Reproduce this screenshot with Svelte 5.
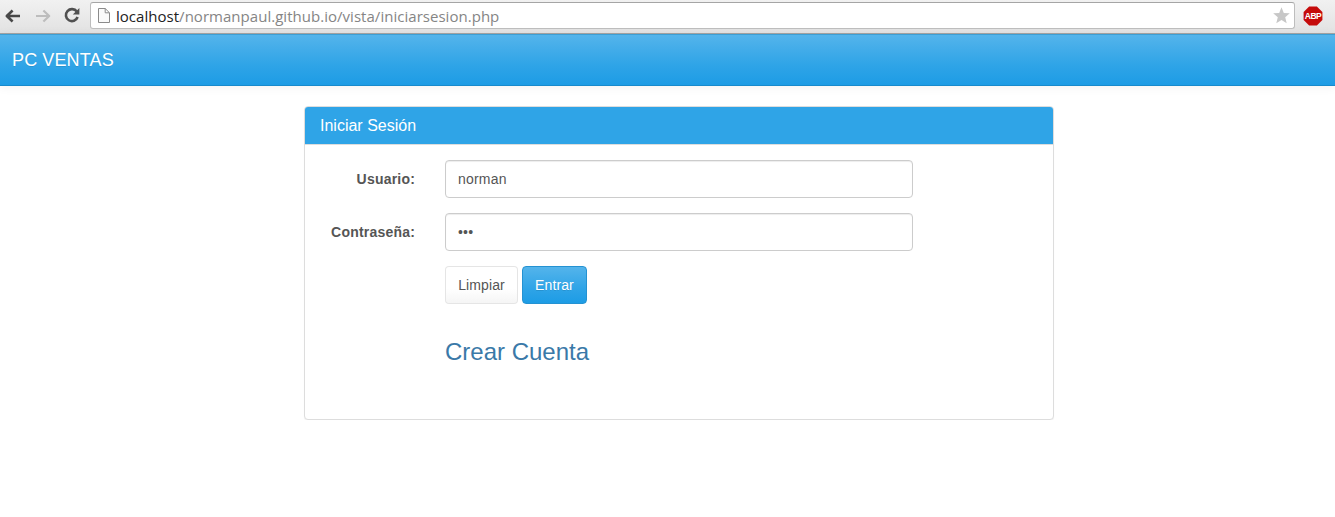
<script>
  let username = $state('norman');
  let password = $state('abc');

  function clearForm() {
    username = '';
    password = '';
  }
</script>

<div class="toolbar">
  <svg class="nav-icon" width="16" height="16" viewBox="0 0 16 16" fill="none" stroke="#484848" stroke-width="2.6" stroke-linejoin="round"><path d="M15 8H2M7.6 2.5L1.8 8l5.8 5.5" /></svg>
  <svg class="nav-icon forward" width="16" height="16" viewBox="0 0 16 16" fill="none" stroke="#bdbdbd" stroke-width="2.2" stroke-linejoin="round"><path d="M1 8h13M8.4 2.5L14.2 8l-5.8 5.5" /></svg>
  <svg class="nav-icon reload" width="16" height="16" viewBox="0 0 16 16"><path d="M12.8 4.6A6 6 0 1 0 13.6 10" fill="none" stroke="#505050" stroke-width="2.6" /><path d="M15.4 1v6.6H8.8z" fill="#505050" /></svg>
  <div class="address">
    <svg class="page-icon" width="12" height="15" viewBox="0 0 12 15" fill="#fafafa" stroke="#8b8b8b"><path d="M.5.5h6.7l4.3 4.3v9.7H.5zM7.2.5v4.3h4.3" /></svg>
    <span class="url">localhost<span class="path">/normanpaul.github.io/vista/iniciarsesion.php</span></span>
    <svg class="star" width="17" height="17" viewBox="0 0 17 17" fill="#c7c7c7"><path d="M8.5.2l2.3 5.7 6 .4-4.6 3.9 1.5 6-5.2-3.3-5.2 3.3 1.5-6L.2 6.3l6-.4z" /></svg>
  </div>
  <svg class="abp" width="20" height="20" viewBox="0 0 20 20"><path d="M6.1.6h7.8l5.5 5.5v7.8l-5.5 5.5H6.1L.6 13.9V6.1z" fill="#c50b0b" /><text x="10" y="13.3" text-anchor="middle" fill="#fff">ABP</text></svg>
</div>

<nav class="navbar"><span class="brand">PC VENTAS</span></nav>

<main class="panel">
  <div class="heading">Iniciar Sesión</div>
  <form onsubmit={(e) => e.preventDefault()}>
    <div class="row">
      <label for="user">Usuario:</label>
      <input id="user" type="text" bind:value={username} />
    </div>
    <div class="row">
      <label for="pass">Contraseña:</label>
      <input id="pass" type="password" bind:value={password} />
    </div>
    <div class="actions">
      <button type="button" class="btn plain" onclick={clearForm}>Limpiar</button>
      <button type="submit" class="btn primary">Entrar</button>
    </div>
    <h3><a href="#crear">Crear Cuenta</a></h3>
  </form>
</main>

<style>
  :global(body) {
    margin: 0;
    background: #fff;
    color: #555;
    font: 14px/20px "Liberation Sans", Arial, sans-serif;
  }
  * { box-sizing: border-box; }
  svg { display: block; flex: none; overflow: visible; }
  .toolbar {
    display: flex;
    align-items: flex-start;
    height: 34px;
    padding: 2px 11px 0 5px;
    background: linear-gradient(#f1f1f1, #e2e2e2);
    border-bottom: 1px solid #a4a4a4;
  }
  .nav-icon { margin-top: 5.5px; }
  .forward { margin-left: 14px; }
  .reload { margin-left: 13px; margin-top: 5px; }
  .address {
    display: flex;
    align-items: center;
    width: 1205px;
    height: 27px;
    margin-left: 10px;
    padding: 0 4px 0 7px;
    background: #fff;
    border: 1px solid #bdbdbd;
    border-top-color: #a5a5a5;
    border-radius: 3px;
  }
  .url {
    flex: 1;
    margin-left: 6px;
    color: #222;
    font: 15px/24px "Open Sans", "Noto Sans", sans-serif;
    letter-spacing: .03px;
    white-space: nowrap;
  }
  .path { color: #858585; }
  .abp { margin: 4px 0 0 8px; }
  .abp text { font: bold 8.5px/10px "Liberation Sans", Arial, sans-serif; letter-spacing: -.5px; }
  .navbar {
    display: flex;
    align-items: center;
    height: 52px;
    padding: 0 12px;
    background: linear-gradient(#54b4eb, #2fa4e7 60%, #1d9ce5);
    border-top: 1px solid #3d9fd4;
    border-bottom: 1px solid #178acc;
    box-shadow: 0 1px 10px rgba(0, 0, 0, .06);
  }
  .brand {
    color: #fff;
    font-size: 18px;
    letter-spacing: .12px;
    text-shadow: 0 1px 0 rgba(0, 0, 0, .1);
  }
  .panel {
    width: 750px;
    height: 314px;
    margin: 20px 0 0 304px;
    background: #fff;
    border: 1px solid #ddd;
    border-radius: 4px;
    box-shadow: 0 1px 1px rgba(0, 0, 0, .05);
  }
  .heading {
    height: 38px;
    padding: 10px 15px;
    color: #fff;
    background: #2fa4e7 padding-box;
    border-bottom: 1px solid #ddd;
    border-radius: 3px 3px 0 0;
    font-size: 16px;
    line-height: 18px;
  }
  form { padding: 15px 0 0; }
  .row {
    display: flex;
    align-items: center;
    margin-bottom: 15px;
  }
  label {
    width: 110px;
    margin-right: 30px;
    text-align: right;
    font-weight: bold;
    letter-spacing: .2px;
  }
  input {
    width: 468px;
    height: 38px;
    padding: 8px 12px;
    color: #555;
    background: #fff;
    border: 1px solid #ccc;
    border-radius: 4px;
    box-shadow: inset 0 1px 1px rgba(0, 0, 0, .075);
    font: inherit;
    letter-spacing: .2px;
    outline: 0;
  }
  .actions {
    display: flex;
    gap: 4px;
    margin-left: 140px;
  }
  .btn {
    height: 38px;
    padding: 8px 0;
    border: 1px solid rgba(0, 0, 0, .1);
    border-radius: 4px;
    font: inherit;
    letter-spacing: .12px;
  }
  .plain {
    width: 73px;
    color: #555;
    background: linear-gradient(#fff, #fff 60%, #f5f5f5) padding-box;
  }
  .primary {
    width: 65px;
    color: #fff;
    background: linear-gradient(#54b4eb, #2fa4e7 60%, #1d9ce5);
    border-color: #2492d2;
    text-shadow: 0 1px 0 rgba(0, 0, 0, .1);
  }
  h3 {
    margin: 34px 0 0 140px;
    font-size: 24px;
    font-weight: normal;
    line-height: 27px;
  }
  a { color: #3a79a8; text-decoration: none; }
</style>
